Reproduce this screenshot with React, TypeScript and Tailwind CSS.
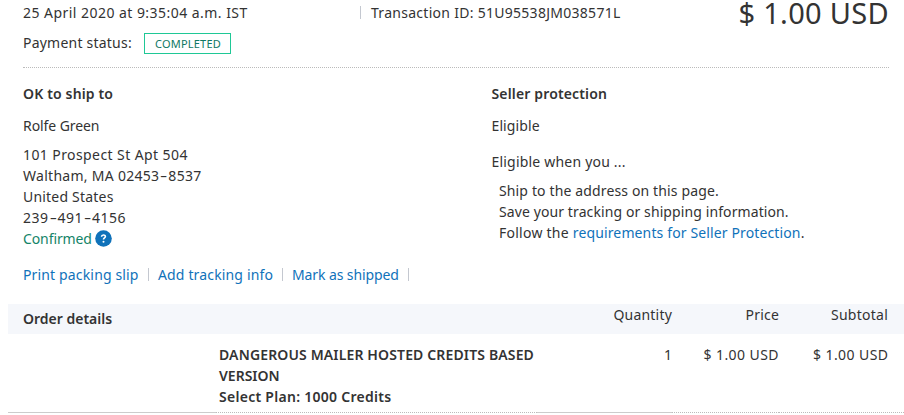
import type { ReactNode } from "react";

const ADDRESS = [
  { text: "101 Prospect St Apt 504", cls: "tracking-[0.41px]" },
  { text: "Waltham, MA 02453-8537", cls: "tracking-[0.28px]" },
  { text: "United States", cls: "tracking-[0.2px]" },
  { text: "239-491-4156", cls: "tracking-[0.5px]" },
];

const ACTIONS = [
  { label: "Print packing slip", cls: "tracking-[0.15px] w-[116px]" },
  { label: "Add tracking info", cls: "tracking-[0.15px] w-[115px]" },
  { label: "Mark as shipped", cls: "tracking-[-0.1px] w-[107px]" },
];

const COLS = "grid grid-cols-[208px_321px_135px_107px_125px]";

function Divider({ className = "" }: { className?: string }) {
  return <span className={`h-[13px] w-px shrink-0 bg-[#c4c8d0] ${className}`} />;
}

function Link({ children, className = "" }: { children: ReactNode; className?: string }) {
  return (
    <a href="#" className={`text-[#1072ba] ${className}`}>
      {children}
    </a>
  );
}

// numbers use a wide hyphen
function WideHyphens({ text }: { text: string }) {
  return (
    <>
      {text.split("-").map((part, i) => (
        <span key={i}>
          {i > 0 && <span className="inline-block w-[9px] scale-x-[1.6] text-center tracking-normal">-</span>}
          {part}
        </span>
      ))}
    </>
  );
}

function HelpIcon() {
  return (
    <svg width="17" height="17" viewBox="0 0 17 17" className="-mt-px ml-1">
      <circle cx="8.5" cy="8.5" r="8.3" fill="#1072ba" />
      <path d="M6.5 6.7C6.6 4.6 10.4 4.5 10.4 6.6C10.4 8 8.5 8 8.5 9.6" fill="none" stroke="#fff" strokeWidth="1.6" />
      <circle cx="8.5" cy="11.8" r="1" fill="#fff" />
    </svg>
  );
}

export default function App() {
  return (
    <div className="h-[415px] w-[904px] whitespace-nowrap bg-white font-['Noto_Sans',sans-serif] text-[14px] leading-[21px] text-[#333]">
      <header className="ml-[23px] mr-[15px] flex h-[68px] justify-between border-b border-dotted border-[#bbb]">
        <div className="pt-[2px]">
          <div className="flex h-[21px] items-center">
            <span className="w-[337px] tracking-[0.46px]">25 April 2020 at 9:35:04 a.m. IST</span>
            <Divider className="mr-[10px]" />
            <span className="tracking-[0.28px]">Transaction ID: 51U95538JM038571L</span>
          </div>
          <div className="mt-[9px] flex h-[21px] items-center">
            <span className="w-[121px] tracking-[0.22px]">Payment status:</span>
            <span className="mt-[2px] flex h-[21px] w-[87px] items-center justify-center border border-[#1fc896] pl-px text-[11px] tracking-[0.2px] text-[#0f7864]">
              COMPLETED
            </span>
          </div>
        </div>
        <div className="text-[29px] leading-[26px] tracking-[0.3px]">$ 1.00 USD</div>
      </header>

      <main className="ml-[23px] flex h-[236px] pt-[15px]">
        <section className="w-[468.5px]">
          <h2 className="font-semibold tracking-[0.15px]">OK to ship to</h2>
          <p className="mt-[11px] tracking-[-0.08px]">Rolfe Green</p>
          <div className="mt-2">
            {ADDRESS.map((line) => (
              <p key={line.text} className={line.cls}>
                <WideHyphens text={line.text} />
              </p>
            ))}
            <p className="flex items-center text-[#138468]">
              <span className="w-[68px] tracking-[-0.1px]">Confirmed</span>
              <HelpIcon />
            </p>
          </div>
          <div className="mt-[15px] flex items-center">
            {ACTIONS.map((a) => (
              <span key={a.label} className="flex items-center">
                <Link className={a.cls}>{a.label}</Link>
                <Divider className="ml-[9px] mr-[9px]" />
              </span>
            ))}
          </div>
        </section>

        <section>
          <h2 className="font-semibold tracking-[0.15px]">Seller protection</h2>
          <p className="mt-[11px] tracking-[0.1px]">Eligible</p>
          <p className="mt-[15px] tracking-[0.2px]">Eligible when you ...</p>
          <ul className="ml-[7.5px] mt-2">
            <li className="tracking-[0.14px]">Ship to the address on this page.</li>
            <li className="tracking-[0.1px]">Save your tracking or shipping information.</li>
            <li className="tracking-[0.25px]">
              Follow the <Link className="tracking-[0.13px]">requirements for Seller Protection</Link>.
            </li>
          </ul>
        </section>
      </main>

      <section className="ml-2">
        <div className={`${COLS} h-[30px] bg-[#f5f7fb] text-right`}>
          <h2 className="col-span-2 pl-[15px] pt-1 text-left font-semibold">Order details</h2>
          <span className="tracking-[0.2px]">Quantity</span>
          <span className="tracking-[0.2px]">Price</span>
          <span className="pr-4 tracking-[0.25px]">Subtotal</span>
        </div>
        <div className={`${COLS} h-[79px] text-right`}>
          <div className="border-b border-[#ccc]" />
          <div className="border-b border-dotted border-[#bbb] pl-[3px] pt-[10px] text-left font-semibold">
            <p className="tracking-[0.14px]">DANGEROUS MAILER HOSTED CREDITS BASED</p>
            <p>VERSION</p>
            <p className="tracking-[0.28px]">Select Plan: 1000 Credits</p>
          </div>
          <div className="border-b border-[#ccc] pt-[10px]">1</div>
          <div className="border-b border-dotted border-[#bbb] pt-[10px] tracking-[0.43px]">$ 1.00 USD</div>
          <div className="border-b border-dotted border-[#bbb] pr-[15.5px] pt-[10px] tracking-[0.43px]">$ 1.00 USD</div>
        </div>
      </section>
    </div>
  );
}
